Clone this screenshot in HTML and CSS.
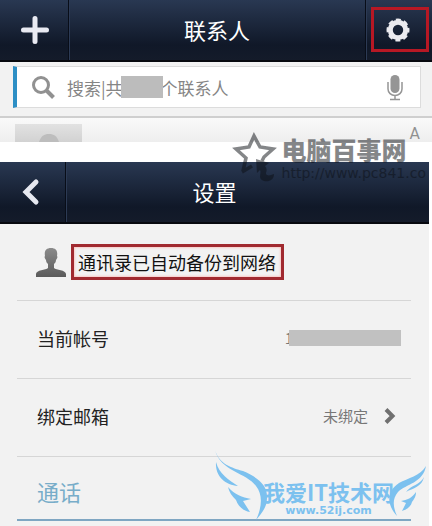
FILE: index.html
```html
<!DOCTYPE html>
<html lang="zh-CN">
<head>
	<meta charset="UTF-8">
	<meta name="viewport" content="width=device-width, initial-scale=1.0">
	<title>联系人 - 设置</title>
	<link rel="stylesheet" href="styles.css">
</head>
<body>
	<!-- 联系人 -->
	<section class="contacts">
		<header class="bar">
			<button class="bar-btn bar-left" type="button" aria-label="添加联系人">
				<svg width="28" height="28" viewBox="0 0 28 28"><path d="M14 2.500v23M2.500 14h23" stroke="#e9eaf2" stroke-width="5" stroke-linecap="round"/></svg>
			</button>
			<h1 class="bar-title">联系人</h1>
			<div class="bar-right">
				<button class="gear-btn" type="button" aria-label="设置">
					<svg width="24" height="24" viewBox="0 0 24 24">
						<g fill="none" stroke="#ebebf0">
							<circle cx="12" cy="12" r="7.700" stroke-width="5"/>
							<circle cx="12" cy="12" r="10" stroke-width="3" stroke-dasharray="4.800 3.054" stroke-dashoffset="2.400"/>
						</g>
					</svg>
				</button>
			</div>
		</header>
		<form class="search">
			<label class="search-box">
				<svg class="search-icon" width="24" height="24" viewBox="0 0 24 24" fill="none" stroke="#919191"><circle cx="10" cy="10" r="7.500" stroke-width="3"/><path d="M15.500 15.500l7 7" stroke-width="4"/></svg>
				<input class="search-input" type="text" aria-label="搜索联系人" placeholder="搜索|共　　 个联系人">
				<span class="search-mask"></span>
				<svg width="16" height="27" viewBox="0 0 16 27" fill="none" stroke="#959595"><rect x="3.500" y="1" width="9" height="18" rx="4.500" fill="#959595" stroke="none"/><path d="M1 8v7a7 6.500 0 0 0 14 0V8M8 21.500V25M3 25.500h10" stroke-width="1.500"/></svg>
			</label>
		</form>
		<div class="list">
			<div class="avatar"><svg width="20" height="8" viewBox="0 0 20 8"><path d="M0 8C2 2 5 0 10 0s8 2 10 8z" fill="#bdbdbd"/></svg></div>
			<span class="letter">A</span>
		</div>
	</section>

	<!-- 设置 -->
	<section class="settings">
		<header class="bar">
			<button class="bar-btn bar-back" type="button" aria-label="返回">
				<svg width="18" height="28" viewBox="0 0 18 28" fill="none" stroke="#e6e8f0" stroke-width="5" stroke-linecap="round"><path d="M14 4L4 14l10 10"/></svg>
			</button>
			<h2 class="bar-title">设置</h2>
			<div class="bar-end"></div>
		</header>
		<div class="rows">
			<div class="row row-backup">
				<svg width="30" height="29" viewBox="0 0 30 29">
					<defs><linearGradient id="man" x1="0" y1="0" x2="0" y2="1"><stop offset="0" stop-color="#8b8b8b"/><stop offset="1" stop-color="#5b5b5b"/></linearGradient></defs>
					<path d="M15 0c-5 0-7 3-6 8-1 1 0 3 1 4 0 2 1 3 2 4v4C10 22 0 22 0 26v3h30v-3c0-4-10-4-12-6v-4c1-1 2-2 2-4 1-1 2-3 1-4 1-5-1-8-6-8z" fill="url(#man)"/>
				</svg>
				<span class="backup">通讯录已自动备份到网络</span>
			</div>
			<div class="row">
				<span>当前帐号</span>
				<span class="account">1<i class="account-mask"></i></span>
			</div>
			<a class="row" href="#email">
				<span>绑定邮箱</span>
				<span class="state">未绑定
					<svg width="12" height="16" viewBox="0 0 12 16" fill="none" stroke="#707070" stroke-width="4"><path d="M2 1.500L8.500 8 2 14.500"/></svg>
				</span>
			</a>
			<h3 class="group">通话</h3>
		</div>
	</section>

	<div class="mark-pc">
		<svg width="46" height="52" viewBox="0 0 46 52" fill="none" stroke="#0c0f14">
			<path d="M11 40l3-13L4 18l13-2 5-11 6 11 13 2-9 8-2 4M10 41l10-6" stroke-width="3.500"/>
			<path d="M24 28l13 4-4 3c4 5-1 7 2 9 2 1 4 0 7-1 0 6-5 8-10 7-7-2-2-8-4-11l-3 3z" fill="#0c0f14" stroke="none"/>
		</svg>
		<div>
			<div class="mark-pc-name">电脑百事网</div>
			<div class="mark-pc-url">http://www.pc841.co</div>
		</div>
	</div>

	<div class="mark-it">
		<svg class="wing-left" width="54" height="72" viewBox="0 0 54 72" fill="#7cc1ef">
			<path d="M0 0C4 14 17 18 28 21 42 27 53 35 52 48c0 9-5 15-11 22 6-13 7-25 0-34C32 23 5 21 0 0z"/>
			<path d="M1 12c3 12 13 18 22 24C11 35 0 27 1 12z"/>
			<path d="M13 37c7 8 14 10 23 12l-8 2 7 11c-7-1-12-6-14-12-4-4-7-8-8-13z"/>
		</svg>
		<div class="mark-it-text">
			<div class="mark-it-name">我爱IT技术网</div>
			<div class="mark-it-url">www.52ij.com</div>
		</div>
		<svg class="wing-right" width="38" height="54" viewBox="0 0 38 54" fill="#7cc1ef">
			<path d="M38 0C32 10 20 12 11 17-1 25-2 38 9 50 5 41 4 33 10 26 18 18 35 17 38 0z"/>
			<path d="M36 11c-2 10-11 11-18 15 5-7 14-7 18-15z"/>
			<path d="M28 26c-4 6-9 8-15 9l5 2-4 8c6-2 9-5 10-9 2-3 4-5 4-10z"/>
		</svg>
	</div>
</body>
</html>
```
FILE: styles.css
```css
* {
	box-sizing: border-box;
}
body {
	margin: 0;
	position: relative;
	background: #fff;
	color: #222;
	font-family: "Noto Sans CJK SC", sans-serif;
	font-size: 18px;
	overflow-x: hidden;
}
button {
	padding: 0;
	border: 0;
	background: none;
}
svg {
	display: block;
	flex: none;
}

/* 顶部栏 */
.bar {
	display: flex;
	height: 62px;
	background: linear-gradient(#293852, #101828 75%, #141b2a);
	border-bottom: 2px solid #07090f;
}
.bar-btn {
	display: flex;
	align-items: center;
	justify-content: center;
	border-right: 1px solid #080d18;
	box-shadow: 1px 0 #2c3a54;
}
.bar-left {
	width: 69px;
	padding-left: 2px;
}
.bar-back {
	width: 66px;
	padding-right: 4px;
}
.bar-title {
	flex: 1;
	margin: 0;
	color: #fff;
	font-size: 22px;
	font-weight: 400;
	line-height: 58px;
	text-align: center;
}
.bar-right {
	width: 67px;
	padding: 7px 3px 0 5px;
	border-left: 1px solid #080d18;
	box-shadow: inset 1px 0 #2c3a54;
}
.bar-end {
	width: 66px;
}
.gear-btn {
	display: flex;
	align-items: center;
	justify-content: center;
	width: 100%;
	height: 45px;
	padding-right: 4px;
	border: 3px solid #b71824;
}

/* 搜索 */
.search {
	padding: 4px 11px 8px 13px;
	background: #f2f2f2;
	border-bottom: 2px solid #cfcfcf;
}
.search-box {
	position: relative;
	display: flex;
	align-items: center;
	height: 42px;
	padding: 0 17px 0 14px;
	background: #fff;
	border: 1px solid #dcdcdc;
	border-left: 4px solid #2d8fc5;
}
.search-input {
	flex: 1;
	min-width: 0;
	margin-left: 12px;
	padding: 0;
	border: 0;
	outline: 0;
	background: none;
	font: inherit;
	font-size: 17px;
}
.search-input::placeholder {
	color: #858585;
}
.search-mask {
	position: absolute;
	left: 104px;
	top: 9px;
	width: 42px;
	height: 22px;
	background: #bcbcbc;
}
.list {
	display: flex;
	justify-content: space-between;
	height: 24px;
	margin-bottom: 20px;
	padding: 6px 12px 0 15px;
	background: linear-gradient(#fafafa, #eee);
}
.avatar {
	display: flex;
	align-items: flex-end;
	justify-content: center;
	width: 67px;
	background: linear-gradient(#e2e2e2, #d2d2d2);
}
.letter {
	color: #909090;
	font-family: Roboto, sans-serif;
	font-size: 16px;
	line-height: 20px;
}

/* 设置 */
.settings {
	margin-right: 3px;
	background: #f2f2f2;
}
.rows {
	padding: 0 18px 5px 17px;
}
.row {
	display: flex;
	align-items: center;
	justify-content: space-between;
	height: 78px;
	padding: 0 10px 4px 20px;
	border-bottom: 1px solid #d6d6d6;
	color: #222;
	text-decoration: none;
}
.row-backup {
	justify-content: flex-start;
	gap: 5px;
	height: 77px;
	padding: 0 0 0 19px;
}
.backup {
	padding: 0 5px 0 4px;
	border: 3px solid #a12a30;
	box-shadow: inset 0 0 2px 1px #f8c9c6;
	color: #111;
	line-height: 30px;
}
.account {
	display: flex;
	align-items: center;
	color: #777;
	font-size: 15px;
}
.account-mask {
	width: 112px;
	height: 16px;
	margin-left: -4px;
	background: #c1c1c1;
}
.state {
	display: flex;
	align-items: center;
	gap: 16px;
	padding-right: 5px;
	color: #777;
	font-size: 15px;
}
.group {
	margin: 0;
	padding: 8px 20px 2px;
	border-bottom: 2px solid #7fa6c2;
	color: #78adc9;
	font-size: 22px;
	font-weight: 400;
	line-height: 52px;
}

/* 水印 */
.mark-pc {
	position: absolute;
	top: 131px;
	right: 6px;
	display: flex;
	gap: 4px;
	opacity: .5;
	color: #0c0f14;
}
.mark-pc-name {
	font-size: 25px;
	font-weight: 900;
	line-height: 36px;
}
.mark-pc-url {
	font-family: "DejaVu Sans", sans-serif;
	font-size: 14px;
	line-height: 12px;
}
.mark-it {
	position: absolute;
	top: 450px;
	right: 6px;
	display: flex;
	align-items: flex-start;
	color: #7cc1ef;
}
.mark-it-text {
	margin: 27px -6px 0 -6px;
	text-align: center;
	white-space: nowrap;
}
.mark-it-name {
	font-size: 22px;
	font-weight: 700;
	line-height: 28px;
}
.mark-it-url {
	font-family: "DejaVu Sans", sans-serif;
	font-size: 11px;
	font-weight: 700;
	line-height: 12px;
}
.wing-right {
	margin-top: 16px;
}
```
